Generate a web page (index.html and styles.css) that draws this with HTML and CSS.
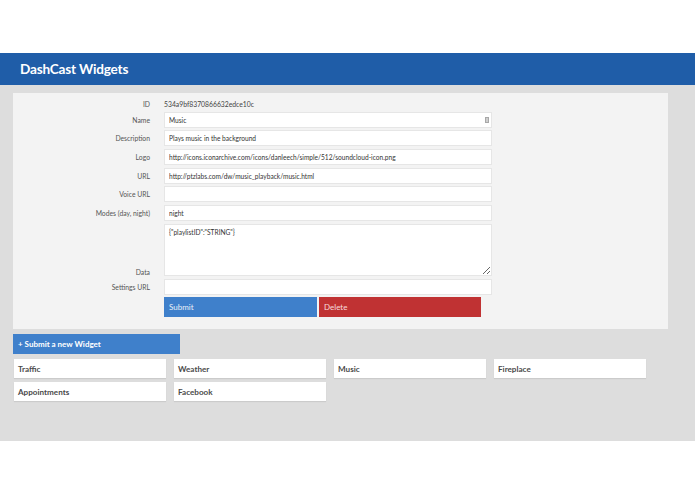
FILE: index.html
```html
<!DOCTYPE html>
<html>
<head>
<meta charset="utf-8">
<title>DashCast Widgets</title>
<link rel="stylesheet" href="styles.css">
</head>
<body>
<div class="top-gap"></div>
<header class="header"><h1 class="title">DashCast Widgets</h1></header>
<main class="main">
  <section class="panel">
    <form class="form">
      <div class="label">ID</div>
      <div class="value id-value">534a9bf8370866632edce10c</div>

      <div class="label">Name</div>
      <div class="field-wrap"><input class="field" type="text" value="Music"><span class="autofill"></span></div>

      <div class="label">Description</div>
      <input class="field" type="text" value="Plays music in the background">

      <div class="label">Logo</div>
      <input class="field" type="text" value="http://icons.iconarchive.com/icons/danleech/simple/512/soundcloud-icon.png">

      <div class="label">URL</div>
      <input class="field" type="text" value="http://ptzlabs.com/dw/music_playback/music.html">

      <div class="label">Voice URL</div>
      <input class="field" type="text" value="">

      <div class="label">Modes (day, night)</div>
      <input class="field" type="text" value="night">

      <div class="label label-bottom">Data</div>
      <textarea class="field area">{"playlistID":"STRING"}</textarea>

      <div class="label">Settings URL</div>
      <input class="field" type="text" value="">

      <div></div>
      <div class="buttons">
        <button type="button" class="btn btn-submit">Submit</button>
        <button type="button" class="btn btn-delete">Delete</button>
      </div>
    </form>
  </section>

  <button type="button" class="new-widget">+ Submit a new Widget</button>

  <div class="cards">
    <div class="card">Traffic</div>
    <div class="card">Weather</div>
    <div class="card">Music</div>
    <div class="card">Fireplace</div>
    <div class="card">Appointments</div>
    <div class="card">Facebook</div>
  </div>
</main>
</body>
</html>
```

FILE: styles.css
```css
* { box-sizing: border-box; }
html, body { margin: 0; padding: 0; background: #ffffff; }
body { font-family: "Lato", "Liberation Sans", sans-serif; color: #333; }

.top-gap { height: 53px; }

.header {
  height: 32px;
  background: #1f5da8;
  display: flex;
  align-items: center;
  padding-left: 20px;
}
.title {
  margin: 0;
  color: #ffffff;
  font-size: 13.6px;
  font-weight: 700;
  letter-spacing: -0.2px;
}

.main {
  background: #dddddd;
  height: 356px;
  padding: 8px 27px 0 13px;
  display: flex;
  flex-direction: column;
  align-items: flex-start;
}

.panel {
  background: #f3f3f3;
  width: 655px;
  height: 236px;
  padding-top: 6px;
}

.form {
  display: grid;
  grid-template-columns: 137px 328px;
  column-gap: 14px;
  row-gap: 2.7px;
  grid-template-rows: 10px repeat(6, 16px) 52px 16px 20px;
}

.label {
  font-size: 6.8px;
  color: #555;
  text-align: right;
  align-self: center;
}
.label-bottom { align-self: end; }

.value { font-size: 6.8px; color: #444; align-self: center; }

.field-wrap { position: relative; }
.field {
  width: 100%;
  height: 16px;
  border: 1px solid #e6e6e6;
  background: #ffffff;
  padding: 0 0 0 4px;
  margin: 0;
  font-family: "Lato", "Liberation Sans", sans-serif;
  font-size: 6.6px;
  color: #333;
  outline: none;
  display: block;
}
.area {
  height: 52px;
  padding-top: 3px;
  resize: vertical;
}
.autofill {
  position: absolute;
  right: 3px;
  top: 5px;
  width: 4px;
  height: 6px;
  background: #cfcfcf;
  border: 1px solid #a8a8a8;
}

.buttons {
  display: flex;
  gap: 2px;
  margin-top: -0.5px;
}
.btn {
  height: 20px;
  border: 0;
  margin: 0;
  padding: 0 0 0 5px;
  text-align: left;
  font-family: "Lato", "Liberation Sans", sans-serif;
  font-size: 8px;
  color: #e9f0f8;
}
.btn-submit { width: 153px; background: #3f80cb; }
.btn-delete { width: 162px; background: #c03233; color: #f7dcdc; }

.new-widget {
  margin-top: 5px;
  width: 167px;
  height: 20px;
  border: 0;
  padding: 0 0 0 5px;
  text-align: left;
  background: #3f80cb;
  color: #ffffff;
  font-family: "Lato", "Liberation Sans", sans-serif;
  font-size: 8px;
  font-weight: 700;
}

.cards {
  margin-top: 5px;
  margin-left: 1px;
  display: grid;
  grid-template-columns: repeat(4, 152px);
  column-gap: 8px;
  row-gap: 4px;
}
.card {
  height: 19px;
  background: #ffffff;
  box-shadow: 0 1px 1px rgba(0,0,0,0.08);
  padding-left: 4px;
  display: flex;
  align-items: center;
  font-size: 8.1px;
  font-weight: 700;
  color: #4a4a4a;
}
```
